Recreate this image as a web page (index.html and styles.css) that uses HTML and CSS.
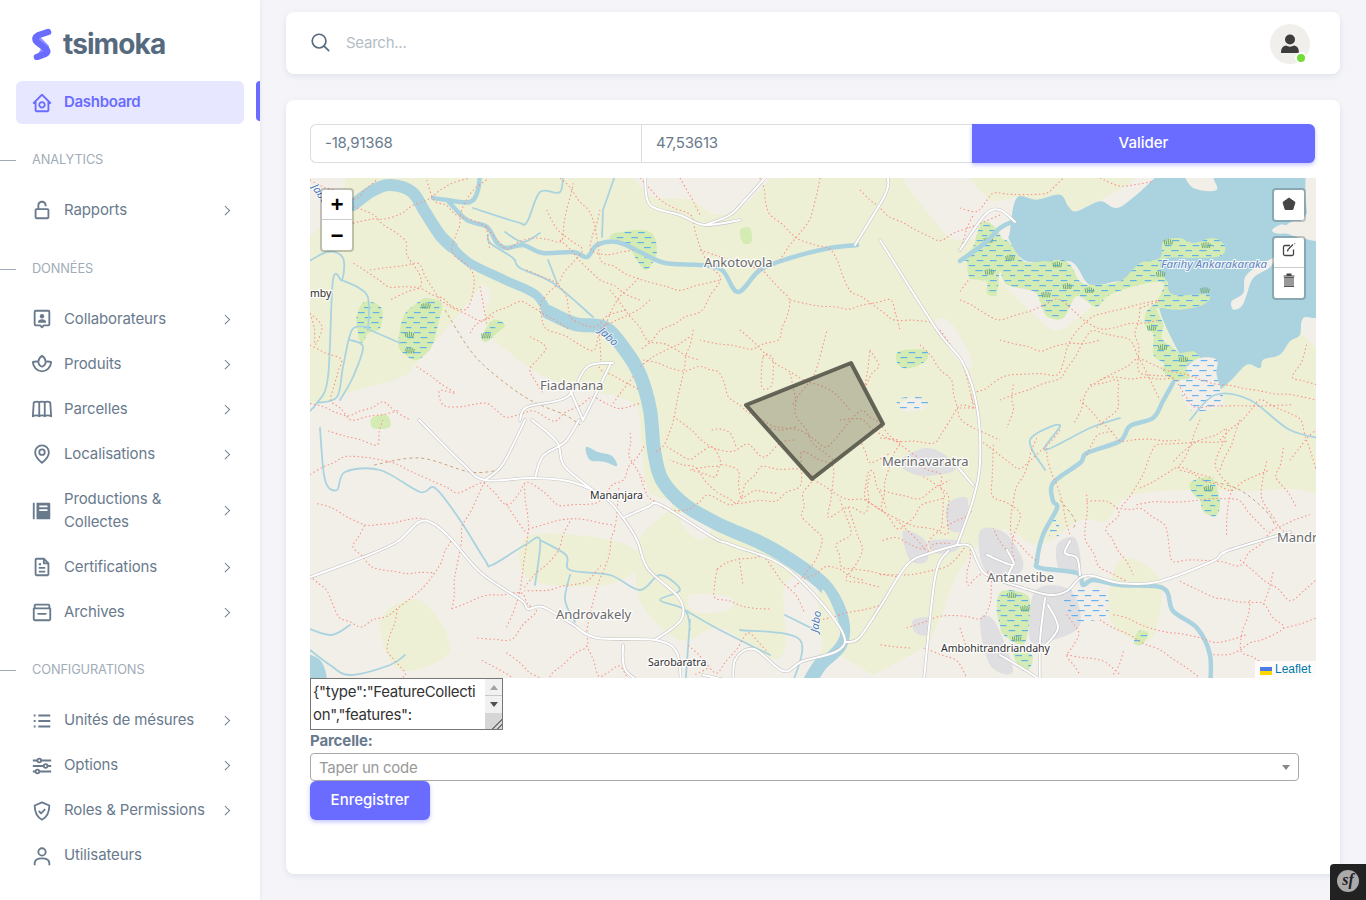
FILE: index.html
```html
<!DOCTYPE html>
<html lang="fr">
<head>
  <meta charset="UTF-8" />
  <meta name="viewport" content="width=device-width, initial-scale=1.0"/>
  <title>tsimoka | Parcelle</title>
  <link rel="stylesheet" href="styles.css">
</head>
<body>

  <aside class="sidebar">
    <div class="brand">
      <svg class="brand-logo" viewBox="0 0 22 32" width="22" height="32">
        <path class="logo-dark" d="M5 9 L15 19 L9 28" />
        <path class="logo-light" d="M17 4 L8 7 Q2 10 6 14 L15 21 Q18 24 14 26 L6 29" />
      </svg>
      <span class="brand-name">tsimoka</span>
    </div>

    <ul class="menu">
      <li class="menu-item active">
        <svg class="menu-icon" viewBox="0 0 24 24"><path class="solid" d="M3 13h1v7c0 1.103.897 2 2 2h12c1.103 0 2-.897 2-2v-7h1a1 1 0 0 0 .707-1.707l-9-9a.999.999 0 0 0-1.414 0l-9 9A1 1 0 0 0 3 13zm9-8.586 6 6V15l.001 5H6v-9.586l6-6z"/><path class="solid" d="M12 18c2.206 0 4-1.794 4-4s-1.794-4-4-4-4 1.794-4 4 1.794 4 4 4zm0-6c1.103 0 2 .897 2 2s-.897 2-2 2-2-.897-2-2 .897-2 2-2z"/></svg>
        <span class="menu-text">Dashboard</span>
      </li>

      <li class="menu-header">Analytics</li>
      <li class="menu-item">
        <svg class="menu-icon" viewBox="0 0 24 24"><path class="solid" d="M17 8V7c0-2.757-2.243-5-5-5S7 4.243 7 7v3H6c-1.103 0-2 .897-2 2v8c0 1.103.897 2 2 2h12c1.103 0 2-.897 2-2v-8c0-1.103-.897-2-2-2H9V7c0-1.654 1.346-3 3-3s3 1.346 3 3v1h2zm1 4 .002 8H6v-8h12z"/></svg>
        <span class="menu-text">Rapports</span><i class="chevron"></i>
      </li>

      <li class="menu-header">Données</li>
      <li class="menu-item">
        <svg class="menu-icon" viewBox="0 0 24 24"><path class="line" d="M5 3h14a1 1 0 0 1 1 1v14a1 1 0 0 1-1 1h-5l-2 2-2-2H5a1 1 0 0 1-1-1V4a1 1 0 0 1 1-1z"/><circle class="solid" cx="12" cy="9" r="2.4"/><path class="solid" d="M7.5 16c0-2.5 2-3.6 4.500-3.600s4.500 1.100 4.500 3.600z"/></svg>
        <span class="menu-text">Collaborateurs</span><i class="chevron"></i>
      </li>
      <li class="menu-item">
        <svg class="menu-icon" viewBox="0 0 24 24"><path class="line" d="M12 3c2.500 2 4 4 4 6.500 0 2.500-1.800 4.500-4 5.500-2.200-1-4-3-4-5.500C8 7 9.500 5 12 3z"/><path class="line" d="M7.500 9.500C5.500 9 3.500 9.300 2 10c.5 5.500 4.500 10 10 10s9.500-4.500 10-10c-1.500-.7-3.500-1-5.500-.5"/></svg>
        <span class="menu-text">Produits</span><i class="chevron"></i>
      </li>
      <li class="menu-item">
        <svg class="menu-icon" viewBox="0 0 24 24"><path class="line" d="M3 5c2-1.500 5-1.500 6 0 1-1.500 5-1.500 6 0 1-1.500 4-1.500 6 0l1 15c-2-1.500-6-1.500-7 0-1-1.500-5-1.500-6 0-1-1.500-5-1.500-7 0z"/><path class="line" d="M9 5v15M15 5v15"/></svg>
        <span class="menu-text">Parcelles</span><i class="chevron"></i>
      </li>
      <li class="menu-item">
        <svg class="menu-icon" viewBox="0 0 24 24"><path class="line" d="M12 2.500a7.500 7.500 0 0 0-7.500 7.500c0 4.700 5 9.500 7.500 11.500 2.500-2 7.500-6.800 7.500-11.500A7.500 7.500 0 0 0 12 2.500z"/><circle class="line" cx="12" cy="10" r="3"/></svg>
        <span class="menu-text">Localisations</span><i class="chevron"></i>
      </li>
      <li class="menu-item">
        <svg class="menu-icon" viewBox="0 0 24 24"><path class="solid" d="M2 3h2v18H2zM6 3h14a1 1 0 0 1 1 1v16a1 1 0 0 1-1 1H6zm3 3v2h9V6zm0 4v2h9v-2z"/></svg>
        <span class="menu-text">Productions &amp; Collectes</span><i class="chevron"></i>
      </li>
      <li class="menu-item">
        <svg class="menu-icon" viewBox="0 0 24 24"><path class="line" d="M6 3h8l5 5v12a1 1 0 0 1-1 1H6a1 1 0 0 1-1-1V4a1 1 0 0 1 1-1z"/><path class="line" d="M14 3v5h5M8.500 9H11M8.500 13h7M8.500 17h7"/></svg>
        <span class="menu-text">Certifications</span><i class="chevron"></i>
      </li>
      <li class="menu-item">
        <svg class="menu-icon" viewBox="0 0 24 24"><path class="line" d="M5 4h14a1 1 0 0 1 1 1v3H4V5a1 1 0 0 1 1-1zM3 8h18v12a1 1 0 0 1-1 1H4a1 1 0 0 1-1-1z"/><path class="line" d="M8 13v1h8v-1"/></svg>
        <span class="menu-text">Archives</span><i class="chevron"></i>
      </li>

      <li class="menu-header">Configurations</li>
      <li class="menu-item">
        <svg class="menu-icon" viewBox="0 0 24 24"><path class="line" d="M8 6h13M8 12h13M8 18h13M3 6h2M3 12h2M3 18h2"/></svg>
        <span class="menu-text">Unités de mésures</span><i class="chevron"></i>
      </li>
      <li class="menu-item">
        <svg class="menu-icon" viewBox="0 0 24 24"><path class="line" d="M2 6h5M11 6h11M2 12h12M18 12h4M2 18h3M9 18h13"/><circle class="line" cx="9" cy="6" r="2"/><circle class="line" cx="16" cy="12" r="2"/><circle class="line" cx="7" cy="18" r="2"/></svg>
        <span class="menu-text">Options</span><i class="chevron"></i>
      </li>
      <li class="menu-item">
        <svg class="menu-icon" viewBox="0 0 24 24"><path class="line" d="M12 2.500 4 6c0 7 1.500 12 8 15.500C18.500 18 20 13 20 6z"/><path class="line" d="m8.500 12 2.500 2.500 4.500-4.500"/></svg>
        <span class="menu-text">Roles &amp; Permissions</span><i class="chevron"></i>
      </li>
      <li class="menu-item">
        <svg class="menu-icon" viewBox="0 0 24 24"><circle class="line" cx="12" cy="7.500" r="4"/><path class="line" d="M4 22v-2c0-3.500 3-5.500 8-5.500s8 2 8 5.500v2"/></svg>
        <span class="menu-text">Utilisateurs</span>
      </li>
    </ul>
  </aside>

  <main class="content">
    <nav class="topbar">
      <svg class="search-icon" viewBox="0 0 24 24" width="22" height="22"><circle cx="11" cy="11" r="7.500"/><path d="m16.500 16.500 5 5"/></svg>
      <span class="search-text">Search...</span>
      <div class="avatar">
        <svg viewBox="0 0 24 24" width="24" height="24"><circle cx="12" cy="7.500" r="5"/><path d="M3 21c0-5 2-7 5-7.500 2.500 1.500 5.500 1.500 8 0 3 .5 5 2.500 5 7.500z"/></svg>
        <span class="avatar-status"></span>
      </div>
    </nav>

    <section class="card">
      <form class="coords">
        <input class="coord-input" type="text" value="-18,91368">
        <input class="coord-input" type="text" value="47,53613">
        <button class="btn-valider" type="button">Valider</button>
      </form>

      <div class="map">
        <svg class="map-svg" viewBox="310 178 1006 500" width="1006" height="500">
          <defs>
            <pattern id="marsh" patternUnits="userSpaceOnUse" width="84" height="60">
              <path class="dash" d="M6 8h20M50 8h20M26 23h20M70 23h14M0 23h6M4 38h20M46 38h22M24 53h20M66 53h16" />
            </pattern>
            <g id="grass"><path class="grass" d="M0 0-3-14M5 0 3-16M10 0V-18M15 0l2-16M20 0l3-13" /></g>
            <g id="road-net">
              <path d="M300 581 361 558 397 542 419 522 434 524 452 540 481 573 521 600 528 609 543 607 572 624 597 638 655 640 677 653 681 690" />
              <path d="M419 420 463 464 485 480 532 478 572 482 605 498 623 518 637 540 648 569 679 598 681 620 655 640M623 645 626 671 655 690M703 675 734 682" />
              <path d="M485 480 503 464 525 420M532 420 557 442 565 467 601 496M535 478 543 456 565 442 579 420" />
              <path d="M613 363 587 367 567 397 527 407 520 420M610 365 593 400 583 420M570 390 583 420" />
              <path d="M623 518 648 507 661 505 714 538 732 545 790 571 845 640 801 662 783 671 754 649 735 660 734 690M845 642 859 638 880 607 907 565 930 553 957 545" />
              <path d="M880 240 937 330 963 363 977 407 980 463 973 500 957 545M948 551 935 578 923 690M957 466 973 485" />
              <path d="M957 545 970 546 977 561 987 575 1023 588 1050 595 1067 591 1080 578 1093 576 1120 583 1157 582 1213 561 1227 551 1290 532" />
              <path d="M987 555 1013 565 1007 550M1013 565 1008 575M1070 541 1065 553 1077 558 1080 575M1045 598 1040 641 1040 690M1048 605 1058 628 1043 648M1000 655 1027 671 1047 685" />
              <path d="M765 178 745 200 730 215 705 225M645 178 650 205 680 215 705 225 740 220M855 245 885 195 888 178M960 250 985 215 1000 210 1015 222" />
            </g>
          </defs>

          <rect class="farm" x="310" y="178" width="1006" height="500" />
          <!-- beige clearings on top of the farmland -->
          <path class="land" d="M295 440 338 398 400 378 417 363 473 297 480 285 490 293 487 330 533 370 573 387 633 403 641 440 648 490 672 505 640 540 640 600 680 640 720 628 765 656 785 650 785 585 815 580 822 640 850 700H295z" />
          <path class="land" d="M880 700 930 640 960 570 1000 530 1040 545 1080 520 1107 521 1133 495 1237 491 1330 511V700z" />
          <path class="land" d="M295 165H345L330 215 295 240zM640 165H765L755 195 720 215 690 200 650 195zM905 165H1010L1015 220 960 240 930 215zM935 325 950 322 972 360 962 365z" />
          <path class="land" d="M1000 165H1330V340L1290 320 1270 280 1180 240 1100 300 1060 330 1040 320 1000 280 980 250z" />
          <path class="farm" d="M528 536 612 540 640 560 610 584 530 580zM420 600 450 650 400 670 380 620zM1120 560 1160 580 1150 640 1110 620zM980 165H1140L1090 205 1040 215 1020 198 990 200z" />
          <path class="land" d="M690 595 730 597 728 610 695 612zM690 505 715 520 700 540 680 520z" />

          <!-- built up -->
          <g class="urban">
            <path d="M900 460 925 448 945 455 955 470 925 476 905 470zM903 531 925 540 927 561 910 560zM947 505 967 498 965 528 950 530zM930 541 960 541 955 551 935 553zM980 531 1005 533 1023 561 1015 575 985 570zM1057 545 1075 538 1080 568 1060 570zM1035 591 1070 590 1080 625 1050 641 1030 640zM913 620 930 618 928 635 915 632zM980 620 995 622 1013 671 990 665z" />
          </g>

          <!-- lake, zoom space -->
          <g transform="translate(960 178) scale(.3333)">
            <path class="water-fill" d="M150 160 170 60 230 65 300 50 325 85 350 100 420 70 470 90 530 50 610 -20H660L700 30 770 35 780 -20H1040L1050 80 1010 140 960 140 945 165 1090 190V400L1030 420 1020 470 990 490 960 530 910 545 900 570 860 560 810 610 750 650 700 600 600 400 620 310 480 310 390 320 330 250 200 250 150 190z" />
            <path class="land" d="M860 290 940 240 930 268 880 300 860 350 845 385 820 395 815 370 850 345zM1000 130 1090 145V190L980 165zM1040 -20H1090V130L1045 120z" />
            <path class="wet" d="M70 130 110 150 125 180 150 195 190 250 250 250 320 250 360 310 400 320 480 310 540 255 600 240 610 190 660 180 700 195 760 180 795 205 780 235 700 240 620 240 600 270 620 310 640 350 745 350 730 380 660 395 600 390 590 395 610 440 605 480 640 510 660 525 700 520 720 545 680 560 690 600 645 610 610 580 610 555 580 530 580 470 555 440 560 400 590 370 610 315 540 320 450 350 420 380 400 385 350 355 310 420 260 415 240 370 220 340 140 320 120 280 110 350 80 345 80 310 30 300 20 250 0 250 40 205 50 170z" />
            <path class="marsh" d="M70 130 110 150 125 180 150 195 190 250 250 250 320 250 360 310 400 320 480 310 540 255 600 240 610 190 660 180 700 195 760 180 795 205 780 235 700 240 620 240 600 270 620 310 640 350 745 350 730 380 660 395 600 390 590 395 610 440 605 480 640 510 660 525 700 520 720 545 680 560 690 600 645 610 610 580 610 555 580 530 580 470 555 440 560 400 590 370 610 315 540 320 450 350 420 380 400 385 350 355 310 420 260 415 240 370 220 340 140 320 120 280 110 350 80 345 80 310 30 300 20 250 0 250 40 205 50 170z" />
            <path class="land" d="M720 540 770 545 770 590 790 660 780 685 700 700 665 650 650 610 690 600 680 570z" />
            <path class="marsh" d="M720 540 770 545 770 590 790 660 780 685 700 700 665 650 650 610 690 600 680 570z" />
            <use href="#grass" x="75" y="195" /><use href="#grass" x="140" y="248" /><use href="#grass" x="78" y="290" /><use href="#grass" x="282" y="268" /><use href="#grass" x="312" y="333" /><use href="#grass" x="248" y="358" /><use href="#grass" x="378" y="345" /><use href="#grass" x="592" y="296" /><use href="#grass" x="728" y="210" /><use href="#grass" x="725" y="345" /><use href="#grass" x="565" y="458" /><use href="#grass" x="598" y="516" /><use href="#grass" x="660" y="552" /><use href="#grass" x="615" y="200" />
          </g>

          <!-- marshes -->
          <g transform="translate(300 170) scale(.3333)">
            <path class="wet" d="M195 395 245 415 240 475 205 490 190 515 178 510 170 440zM380 385 425 400 415 460 395 530 350 570 310 550 295 520 310 440 350 400zM580 450 615 465 590 490 560 515 545 500z" />
            <path class="marsh" d="M195 395 245 415 240 475 205 490 190 515 178 510 170 440zM380 385 425 400 415 460 395 530 350 570 310 550 295 520 310 440 350 400zM580 450 615 465 590 490 560 515 545 500z" />
            <use href="#grass" x="368" y="416" /><use href="#grass" x="318" y="502" /><use href="#grass" x="320" y="550" /><use href="#grass" x="548" y="505" /><use href="#grass" x="980" y="214" />
            <path class="wet" d="M945 190 1020 180 1060 195 1070 250 1040 300 1010 270 990 235 960 215 930 205z" />
            <path class="marsh" d="M945 190 1020 180 1060 195 1070 250 1040 300 1010 270 990 235 960 215 930 205z" />
            <path class="wet" d="M215 745 260 735 270 770 220 775zM1320 180 1350 175 1355 215 1330 220z" />
          </g>
          <g transform="translate(640 330) scale(.3333)">
            <path class="wet" d="M775 65 855 60 860 90 810 115 775 105z" />
            <path class="marsh" d="M775 65 855 60 860 90 810 115 775 105z" />
            <path class="land" d="M780 225 810 205 850 210 855 235 800 245z" />
            <path class="marsh" d="M780 205 860 205 860 235 780 235z" />
          </g>
          <g transform="translate(880 428) scale(.3333)">
            <path class="wet" d="M930 165 995 150 1020 225 1005 265 970 250 960 215 945 205zM365 490 440 500 450 550 440 630 420 650 370 620 360 590 350 545zM400 675 455 680 450 720 425 725zM775 610 805 615 785 650 762 645z" />
            <path class="marsh" d="M930 165 995 150 1020 225 1005 265 970 250 960 215 945 205zM365 490 440 500 450 550 440 630 420 650 370 620 360 590 350 545zM400 675 455 680 450 720 425 725zM775 610 805 615 785 650 762 645zM510 280H535V330H510zM560 490 670 490 680 560 600 580 560 540z" />
            <use href="#grass" x="385" y="510" /><use href="#grass" x="425" y="550" /><use href="#grass" x="400" y="640" /><use href="#grass" x="975" y="190" />
          </g>

          <!-- rivers -->
          <g class="river">
            <path class="r12" d="M353 205 372 191 390 185 412 192 425 212 440 235 452 247" />
            <path class="r9" d="M452 247 470 263 505 280 535 294 548 312" />
            <path class="r14" d="M548 312 575 324 605 328 625 350 640 375 650 410 654 450 662 480 685 505 720 525 765 545 805 570 828 590 842 620 840 645 820 665 805 690" />
            <path class="r5" d="M433 198 447 200 470 202 478 190 480 170M447 200 467 220 487 227 497 243 507 248 523 245 543 253 573 252 587 257 597 245 617 242 640 252 665 263 700 265 722 270 738 292 760 270 790 258 830 248 857 245" />
            <path class="r5" d="M960 261 985 243 1000 228 1012 222" />
            <path class="r5" d="M1173 383 1163 401 1153 418 1130 426 1120 441 1087 453 1080 463 1053 483 1053 501 1057 508 1043 535 1037 561 1040 568 1077 573 1083 585 1093 580 1120 585 1163 588 1173 611 1197 628 1210 655 1210 690" />
            <path class="r2" d="M300 267 327 252 343 258 342 280 333 280 328 377 317 403 305 415M367 327 352 330 343 367 337 397 317 403M350 340 363 347 353 377 340 400M370 330 400 343M342 280 367 295 368 330" />
            <path class="r2" d="M473 208 517 222 527 222 540 192 560 192 563 170M540 233 523 242 505 232M603 210 602 237M617 170 603 210M488 235 490 243 513 258 520 268 553 283 593 317M548 260 557 283" />
            <path class="r2" d="M1045 470 1030 440 1060 425 1045 450 1090 428 1120 418M1190 420 1215 395 1250 400 1290 430 1330 440" />
            <path class="r2" d="M320 428 325 480 337 490 345 472 380 470 420 492 435 488 460 520 485 560 492 565 525 545 540 540 535 585M540 540 566 555 570 570 610 575 640 590 660 575 680 590 660 600 685 610 690 630M570 575 565 600 575 622M685 610 720 630 770 655M740 630 800 640 790 690M785 615 815 630M690 620 685 690" />
            <path class="r2" d="M300 625 330 635 350 625M310 650 330 665 350 675 390 665 405 655" />
          </g>
          <path class="water-fill" d="M295 655 320 660 325 685 295 690zM586 447 598 452 612 456 617 466 605 462 590 460z" />
          <path class="farm" d="M822 590 832 605 840 635 822 655 825 625z" />

          <!-- tracks -->
          <g class="track">
            <path d="M640 178 660 200 690 215 700 250 720 280 700 310 660 330 640 350M760 178 770 215 800 240 830 250 850 290 895 320 930 322M700 250 760 270 790 300 780 340 750 350 700 340M790 300 850 310 890 300 900 330M860 190 890 215 940 240 1000 215M560 178 590 210 600 260 640 280 680 290 720 280M650 300 600 330 600 370 640 390M820 178 810 220 780 260M440 300 480 320 520 300 570 330M960 300 1000 320 1060 300 1100 330 1160 320M1000 400 1060 380 1090 330 1130 340 1160 400M980 440 1020 470 1060 430M1220 440 1260 400 1300 420 1316 470M1200 420 1180 470 1230 490 1270 470M920 345 950 380 960 420 1000 440M310 345 340 360 330 400 350 420 400 410" />
            <path d="M345 225 400 215 440 190 470 178M370 270 420 265 440 300M560 240 600 280 640 300M680 178 700 215M610 290 650 340 700 360M1100 380 1140 360 1200 380 1260 390 1316 400M1000 340 1040 350 1100 340M1080 400 1120 440 1180 440M1240 420 1220 470M1290 460 1316 430M880 490 920 500 950 480M1100 620 1160 650 1200 678M1240 560 1290 600 1316 580M1250 600 1240 650 1290 678" />
          </g>
          <g class="track" transform="translate(640 330) scale(.3333)">
            <path d="M160 0 130 120 100 260 70 350 40 370M10 90 130 125 175 105 240 130 270 200 330 250 400 290 480 300 560 350 600 300 660 240 720 280 790 350 830 380M0 110 80 60 150 20M450 130 470 260 520 340 580 390M370 80 400 80 395 170 365 170zM600 270 660 270 720 310 770 330 880 340 960 230 1005 235M300 0 360 60 410 100 450 130 590 190 630 240M560 5 520 130 455 230M690 60 720 110 700 130 680 170 690 60M900 0 970 100 1000 230M100 260 150 300 220 350 280 360 320 340 370 380 420 340 470 330M215 300 240 295 270 310 290 355M150 420 230 440 240 410 290 420 300 500 320 460 370 410 420 420 480 420 520 450 490 490 490 560 550 630 530 690 480 750M520 450 620 510 670 510 730 545 780 570 880 600 920 610 920 500 880 460 850 440M730 545 680 510 680 430 700 425 740 540M80 350 150 390 215 350 240 400 150 420M600 510 630 610 590 640 610 710 770 740M770 570 800 600 860 660 880 640 930 640M0 440 20 500 80 540 140 540 210 500 270 520 340 480 410 490M380 290 420 300 470 290M660 330 690 400 750 370" />
          </g>
          <g class="track" transform="translate(300 170) scale(.3333)">
            <path d="M30 30 170 90 230 30M160 110 220 130 320 220 320 260 360 310 365 350 270 390M160 280 200 310 270 350 360 350 460 410 500 420 520 360 520 310 460 250 470 200 480 130 520 60 560 30M380 30 400 90 470 130 560 170 620 240 700 200 780 210 800 110 820 40M740 120 770 180 850 240 770 340 720 400 740 480 800 500 880 540 960 380 1020 320M900 120 870 240 920 250 1000 240M350 590 470 670 420 660 430 710 560 700 620 740 700 720 760 750 880 680 960 720 1020 700M540 350 560 460M580 440 530 460 510 490M30 430 70 470 50 520 30 430M30 700 140 740 250 700 330 750M560 170 570 240M680 300 770 340 800 380 820 450 880 470 920 440 980 420M690 500 740 530 690 600 730 670M1000 620 940 700" />
          </g>
          <g class="track" transform="translate(960 178) scale(.3333)">
            <path d="M0 90 50 100 100 50 150 45 260 50 310 0M0 220 40 110M0 340 30 300M420 0 480 20 580 10M540 390 600 370 490 390 400 410 340 470 290 590 140 590 40 650 60 760M540 390 530 470 540 590 640 600 700 690 790 680 940 680 1000 680M390 620 470 610 470 690 410 750M640 600 430 600 380 640 340 740M1040 500 1000 600 1068 620M160 620 160 700 140 750M0 690 50 690" />
          </g>
          <g class="track" transform="translate(880 428) scale(.3333)">
            <path d="M0 30 60 40 30 110 0 240 60 300 130 230 190 210 180 140 70 90M190 210 180 300 130 360 50 330 0 340M300 120 270 260 190 300M340 50 340 200 420 260 400 320 400 400 340 300M470 30 410 180 390 320 470 400M500 60 510 130 530 180 570 320M620 80 660 20 700 10M620 200 620 340 660 420 740 460M620 220 680 220 720 260 680 300 760 440M770 230 880 220 990 210 1080 220 1160 310M780 180 900 120 1000 150M880 100 960 40 1040 0M710 240 780 240 850 290 880 400 970 400 1080 410 1170 310 1290 260M1040 320 1050 180 1010 110 1040 0M1160 100 1140 200 1200 300 1308 340M1210 60 1190 150 1250 240M1040 40 830 50 770 180 720 240M900 460 1000 510 1070 520 1150 530 1210 600 1150 630 1040 680 1000 680M1210 600 1308 570M1150 530 1180 430M560 560 600 620 560 680 600 740M700 560 820 600 900 620 1010 640 1100 620M730 670 700 740 M560 680 680 700 720 740M80 600 140 580 210 560 300 570 330 530 330 430 260 470 270 350M90 660 0 650M130 660 230 700 260 750M240 600 260 660 M0 440 100 440 200 420 260 350" />
          </g>
          <g class="track" transform="translate(310 420) scale(.3636)">
            <path d="M0 150 100 100 200 110 300 150 410 200 480 170 540 230 600 170 680 230 780 230 860 160 920 70M50 30 180 70 200 0M540 230 600 310 590 180M20 230 60 240 150 290 310 270 390 330 340 430 240 520 140 570 80 540 50 470 0 430M150 290 120 350 170 400 230 420 340 420M240 520 210 630 260 700 200 730 110 750M390 520 480 480 580 480 620 530 550 600 460 600M480 170 420 290 390 520M600 310 580 470 540 570M600 300 720 270 840 290 810 400 770 530 760 620 640 720 580 720 470 660M840 290 850 180M720 270 680 360 590 460M800 400 760 440 660 470 590 470M920 170 880 100 880 30M1120 410 1180 380 1250 380 1300 450 1340 480 1360 530M1120 410 1110 490 1190 510 1270 520M1180 380 1190 450M1040 620 1120 700 1200 590 1260 640M1540 150 1530 260 1480 240 1430 270 1440 130 1350 90 1350 180 1280 220 1180 230 1120 200 1060 130 990 110M1520 440 1420 400 1330 460M1480 240 1520 360 1470 440 1568 460M1400 550 1568 510M1060 700 1100 680M760 620 790 700 850 680 900 750M540 640 640 720 640 770M300 770 400 760 480 770" />
          </g>
          <g class="path-line">
            <path d="M445 310 470 350 495 375 530 400 565 415 580 425" /><path d="M374 465 420 458 470 472 500 470" /><path d="M1215 482 1240 490 1265 510 1275 525" /><path d="M1060 500 1075 520 1072 530" />
          </g>

          <!-- roads: grey casing below, white fill above -->
          <g class="roads">
            <use class="road-casing" href="#road-net" />
            <use class="road-fill" href="#road-net" />
          </g>

          <!-- labels -->
          <g class="labels">
            <text class="town" x="704" y="267">Ankotovola</text>
            <text class="town" x="540" y="390">Fiadanana</text>
            <text class="town" x="882" y="466">Merinavaratra</text>
            <text class="town" x="987" y="582">Antanetibe</text>
            <text class="town" x="556" y="619">Androvakely</text>
            <text class="town" x="1277" y="542">Mandr</text>
            <text class="village" x="590" y="499">Mananjara</text>
            <text class="village" x="648" y="666">Sarobaratra</text>
            <text class="village" x="941" y="652">Ambohitrandriandahy</text>
            <text class="village" x="310" y="297">mby</text>
            <text class="lake-name" x="1161" y="268">Farihy Ankarakaraka</text>
            <text class="river-name" transform="translate(598 332) rotate(42)">Jabo</text>
            <text class="river-name" transform="translate(818 633) rotate(-82)">Jabo</text>
            <text class="river-name" transform="translate(311 187) rotate(55)">Jabo</text>
          </g>

          <!-- parcel drawn by the user -->
          <path class="parcel" d="M746 405 851 363 883 424 812 479z" />
        </svg>

        <div class="map-ctrl zoom-ctrl">
          <a class="map-btn zoom-btn">+</a>
          <a class="map-btn zoom-btn">−</a>
        </div>
        <div class="map-ctrl draw-ctrl">
          <a class="map-btn">
            <svg viewBox="0 0 16 16" width="16" height="16"><path class="ico-fill" d="M8 2 14 6.300 11.800 13.500 4.200 13.500 2 6.300z"/></svg>
          </a>
        </div>
        <div class="map-ctrl edit-ctrl">
          <a class="map-btn">
            <svg viewBox="0 0 16 16" width="16" height="16"><path class="ico-line" d="M9 3.500H4A1.500 1.500 0 0 0 2.500 5v7A1.500 1.500 0 0 0 4 13.500h7a1.500 1.500 0 0 0 1.500-1.500V7.500"/><path class="ico-line" d="M6.500 9.500 7 7.500 12 2.500M13.500 1.500l.5.500"/></svg>
          </a>
          <a class="map-btn">
            <svg viewBox="0 0 16 16" width="16" height="16"><path class="ico-grey" d="M3 5h10v10H3z"/><path class="ico-dark" d="M2.500 3.500h11v1h-11zM5.500 1.500h5v2h-5zM3 5h10v.800H3zM3 14.200h10v.800H3z"/></svg>
          </a>
        </div>
        <div class="attribution">
          <span class="flag"></span><a>Leaflet</a>
        </div>
      </div>

      <div class="geojson-box">
        <textarea class="geojson" readonly>{"type":"FeatureCollection","features":[{"id":"f6a1c9","type":"Feature","properties":{},"geometry":{"coordinates":[[[47.53613,-18.91368],[47.54013,-18.91768],[47.54213,-18.91168]]],"type":"Polygon"}}]}</textarea>
        <div class="scrollbar">
          <span class="scroll-btn"><i class="arrow-up"></i></span>
          <span class="scroll-btn"><i class="arrow-down"></i></span>
          <span class="scroll-corner"></span>
        </div>
      </div>
      <label class="field-label">Parcelle:</label>
      <div class="select-box">
        <span class="select-placeholder">Taper un code</span>
        <i class="select-arrow"></i>
      </div>
      <button class="btn-save" type="button">Enregistrer</button>
    </section>
  </main>

  <div class="sf-toolbar"><span class="sf-logo">sf</span></div>

  <script src="map.js"></script>
</body>
</html>
```

FILE: styles.css
```css
* {
  margin: 0;
  padding: 0;
  box-sizing: border-box;
}

html, body {
  height: 900px;
  overflow: hidden;
}

body {
  font-family: 'Inter', 'Liberation Sans', sans-serif;
  font-size: 15px;
  letter-spacing: -0.12px;
  background: #f5f5f9;
  color: #697a8d;
  display: flex;
}

/* sidebar */
.sidebar {
  width: 260px;
  flex-shrink: 0;
  background: #fff;
  box-shadow: 0 0 4px rgba(67, 89, 113, 0.12);
}

.brand {
  height: 81px;
  padding: 7px 0 0 31px;
  display: flex;
  align-items: center;
  gap: 10px;
}

.logo-light, .logo-dark {
  fill: none;
  stroke-linecap: round;
  stroke-linejoin: round;
}

.logo-light {
  stroke: #696cff;
  stroke-width: 6.5;
}

.logo-dark {
  stroke: #8f91ff;
  stroke-width: 6;
}

.brand-name {
  font-size: 28px;
  font-weight: 700;
  color: #566a7f;
  letter-spacing: -0.9px;
}

.menu {
  list-style: none;
}

.menu-item {
  position: relative;
  display: flex;
  align-items: center;
  margin: 0 16px;
  padding: 11.24px 16px;
  line-height: 22.5px;
  border-radius: 6px;
}

.menu-text {
  flex: 1;
}

.menu-icon {
  width: 22px;
  height: 22px;
  margin: 0 11px 0 -1px;
  flex-shrink: 0;
}

.menu-icon .solid {
  fill: #697a8d;
}

.menu-icon .line {
  fill: none;
  stroke: #697a8d;
  stroke-width: 2;
  stroke-linejoin: round;
}

.menu-item.active {
  background: #e7e7ff;
  color: #696cff;
  font-weight: 600;
  letter-spacing: -0.3px;
  padding: 10.25px 16px;
}

.menu-item.active .solid {
  fill: #696cff;
}

.menu-item.active::after {
  content: "";
  position: absolute;
  top: 0;
  right: -16px;
  width: 4px;
  height: 40px;
  background: #696cff;
  border-radius: 4px 0 0 4px;
}

.chevron {
  width: 6.5px;
  height: 6.5px;
  border-top: 1px solid #697a8d;
  border-right: 1px solid #697a8d;
  transform: rotate(45deg);
}

.menu-header {
  position: relative;
  height: 64px;
  padding: 26px 0 0 32px;
  font-size: 12.8px;
  line-height: 20px;
  text-transform: uppercase;
  color: #a1acb8;
}

.menu-header::before {
  content: "";
  position: absolute;
  left: 0;
  top: 36px;
  width: 16px;
  height: 1px;
  background: #a1acb8;
}

/* main column */
.content {
  flex: 1;
  padding: 12px 26px 0;
}

.topbar {
  height: 62px;
  background: #fff;
  border-radius: 8px;
  box-shadow: 0 2px 6px rgba(67, 89, 113, 0.12);
  display: flex;
  align-items: center;
  padding: 0 30px 2px 23px;
  margin-bottom: 26px;
}

.search-icon {
  fill: none;
  stroke: #566a7f;
  stroke-width: 1.8;
  stroke-linecap: round;
  margin-right: 15px;
}

.search-text {
  flex: 1;
  color: #b4bdc6;
  letter-spacing: -0.25px;
}

.avatar {
  position: relative;
  width: 40px;
  height: 40px;
  margin-top: 4px;
  border-radius: 50%;
  background: #f0efec;
  display: flex;
  align-items: center;
  justify-content: center;
}

.avatar svg {
  fill: #3d3d3d;
}

.avatar-status {
  position: absolute;
  right: 3px;
  bottom: 0;
  width: 12px;
  height: 12px;
  border-radius: 50%;
  background: #71dd37;
  border: 2px solid #fff;
}

.card {
  height: 774px;
  background: #fff;
  border-radius: 8px;
  box-shadow: 0 2px 6px rgba(67, 89, 113, 0.12);
  padding: 24px;
}

.coords {
  display: grid;
  grid-template-columns: 331px 331px 343px;
  height: 39px;
  margin-bottom: 15px;
}

.coord-input {
  font: inherit;
  letter-spacing: -0.2px;
  color: #697a8d;
  padding: 0 14px 2px;
  border: 1px solid #d9dee3;
  border-right: 0;
  outline: none;
}

.coord-input:first-child {
  border-radius: 6px 0 0 6px;
}

.btn-valider, .btn-save {
  font: inherit;
  font-weight: 500;
  color: #fff;
  background: #696cff;
  border: 0;
  padding-bottom: 2px;
  box-shadow: 0 2px 4px rgba(105, 108, 255, 0.4);
}

.btn-valider {
  border-radius: 0 6px 6px 0;
}

.btn-save {
  display: block;
  width: 120px;
  height: 39px;
  border-radius: 6px;
}

/* map */
.map {
  position: relative;
  width: 1006px;
  height: 500px;
  overflow: hidden;
  background: #eef0d5;
}

.map-svg {
  display: block;
}

.map-svg path {
  vector-effect: non-scaling-stroke;
}

.land { fill: #f2efe9; }
.farm { fill: #eef0d5; }
.urban { fill: #dfdfe1; }
.water-fill { fill: #aad3df; }
.wet { fill: #d4ecb4; }
.marsh { fill: url(#marsh); }

.map-svg .dash {
  fill: none;
  stroke: #4ba6f2;
  stroke-width: 3;
  vector-effect: none;
}

.grass {
  fill: none;
  stroke: #6ea878;
  stroke-width: 1;
}

.river path {
  fill: none;
  stroke: #aad3df;
  stroke-linejoin: round;
  stroke-linecap: round;
}

.river .r14 { stroke-width: 14px; }
.river .r12 { stroke-width: 12px; }
.river .r9 { stroke-width: 9px; }
.river .r5 { stroke-width: 4.500px; }
.river .r2 { stroke-width: 1.800px; }

.track path {
  fill: none;
  stroke: #f79288;
  stroke-width: 1.100px;
  stroke-dasharray: 1.500 2.500;
}

.path-line path {
  fill: none;
  stroke: #c9a27a;
  stroke-width: 1px;
  stroke-dasharray: 3 3;
}

#road-net path {
  fill: none;
  stroke-linejoin: round;
  stroke-linecap: round;
}

.road-casing {
  stroke: #c6c6c6;
  stroke-width: 3.200px;
}

.road-fill {
  stroke: #fff;
  stroke-width: 2px;
}

.labels text {
  font-family: 'Noto Sans', 'Open Sans', sans-serif;
  letter-spacing: 0;
  paint-order: stroke;
  stroke: rgba(255, 255, 255, 0.85);
  stroke-width: 2.500px;
}

.labels .town {
  font-size: 13px;
  fill: #6a6a6a;
}

.labels .village {
  font-size: 10.500px;
  fill: #2f2f2f;
}

.labels .lake-name {
  font-size: 11.500px;
  font-style: italic;
  fill: #5f83bd;
  stroke-width: 2px;
}

.labels .river-name {
  font-size: 11px;
  font-style: italic;
  fill: #4f79b5;
  stroke-width: 1.500px;
}

.parcel {
  fill: #76755a;
  fill-opacity: 0.4;
  stroke: #57574a;
  stroke-opacity: 0.9;
  stroke-width: 4px;
  stroke-linejoin: round;
}

.map-ctrl {
  position: absolute;
  background: #fff;
  border: 2px solid rgba(0, 0, 0, 0.2);
  background-clip: padding-box;
  border-radius: 4px;
}

.map-btn {
  display: flex;
  align-items: center;
  justify-content: center;
  width: 30px;
  height: 30px;
  border-bottom: 1px solid #ccc;
  color: #000;
}

.map-btn:last-child {
  border-bottom: 0;
}

.zoom-ctrl {
  left: 10px;
  top: 10px;
}

.zoom-btn {
  font-family: 'Liberation Mono', monospace;
  font-size: 22px;
  font-weight: 700;
  padding-top: 4px;
}

.draw-ctrl {
  right: 10px;
  top: 10px;
}

.draw-ctrl svg {
  margin-top: -2px;
}

.edit-ctrl {
  right: 10px;
  top: 58px;
}

.edit-ctrl svg {
  margin-top: -6px;
}

.ico-fill { fill: #444; stroke: #444; stroke-linejoin: round; }
.ico-line { fill: none; stroke: #444; stroke-width: 1.300; }
.ico-grey { fill: #999; }
.ico-dark { fill: #444; }

.attribution {
  position: absolute;
  right: 0;
  bottom: 0;
  height: 17px;
  padding: 0 5px;
  background: rgba(255, 255, 255, 0.8);
  font-family: 'Liberation Sans', sans-serif;
  font-size: 12px;
  letter-spacing: 0;
  line-height: 15px;
  color: #0078a8;
  display: flex;
  align-items: center;
  gap: 3px;
}

.flag {
  width: 12px;
  height: 8px;
  margin-top: 2px;
  background: linear-gradient(#4c7be1 50%, #ffd500 50%);
}

/* form under the map */
.geojson-box {
  position: relative;
  width: 193px;
  height: 52px;
}

.geojson {
  display: block;
  width: 193px;
  height: 52px;
  font: inherit;
  letter-spacing: -0.3px;
  line-height: 22.5px;
  color: #333;
  padding: 2px 19px 2px 2px;
  border: 1px solid #767676;
  overflow: hidden;
  resize: none;
  outline: none;
}

.scrollbar {
  position: absolute;
  top: 1px;
  right: 1px;
  width: 17px;
  height: 50px;
  background: #f1f1f1;
  display: flex;
  flex-direction: column;
}

.scroll-btn {
  height: 17px;
  display: flex;
  align-items: center;
  justify-content: center;
}

.scroll-btn:first-child {
  border-bottom: 1px solid #c8c8c8;
}

.arrow-up, .arrow-down {
  width: 0;
  height: 0;
  border-left: 4px solid transparent;
  border-right: 4px solid transparent;
}

.arrow-up { border-bottom: 5px solid #a3a3a3; }
.arrow-down { border-top: 5px solid #505050; }

.scroll-corner {
  flex: 1;
  background:
    linear-gradient(135deg, transparent 68%, #777 68%, #777 73%, transparent 73%, transparent 84%, #777 84%, #777 89%, transparent 89%),
    #d6d6d6;
}

.field-label {
  display: block;
  font-weight: 700;
  line-height: 22.5px;
  height: 23px;
}

.select-box {
  display: flex;
  align-items: center;
  justify-content: space-between;
  width: 989px;
  height: 28px;
  padding: 1px 8px 0;
  border: 1px solid #aaa;
  border-radius: 4px;
  background: #fff;
}

.select-placeholder {
  color: #999;
  letter-spacing: -0.3px;
}

.select-arrow {
  width: 0;
  height: 0;
  border-left: 4px solid transparent;
  border-right: 4px solid transparent;
  border-top: 5px solid #888;
}

/* debug toolbar badge */
.sf-toolbar {
  position: fixed;
  right: 0;
  bottom: 0;
  width: 36px;
  height: 36px;
  background: #222;
  border-top-left-radius: 4px;
  display: flex;
  align-items: center;
  justify-content: center;
}

.sf-logo {
  width: 22px;
  height: 22px;
  margin-top: -2px;
  border-radius: 50%;
  background: #aaa;
  color: #222;
  font-family: 'Liberation Serif', serif;
  font-style: italic;
  font-weight: 700;
  font-size: 16px;
  line-height: 20px;
  text-align: center;
}
```

FILE: map.js
```js
// turns the hand traced polylines of the map into soft curves,
// tracks get a little wobble so they look like footpaths
let seed = 7;
function rand() {
  seed = (seed * 16807) % 2147483647;
  return seed / 2147483647 - 0.5;
}

function parse(d) {
  const tokens = d.match(/[MLHVZz]|-?\d*\.?\d+/g);
  const parts = [];
  let cur = null, cmd = "M", i = 0;
  while (i < tokens.length) {
    const t = tokens[i];
    if (/[A-Za-z]/.test(t)) {
      cmd = t;
      i++;
      if (cmd === "Z" || cmd === "z") cur.closed = true;
      continue;
    }
    if (cmd === "M") {
      cur = { pts: [[+t, +tokens[i + 1]]], closed: false };
      parts.push(cur);
      cmd = "L";
      i += 2;
    } else if (cmd === "L") {
      cur.pts.push([+t, +tokens[i + 1]]);
      i += 2;
    } else if (cmd === "H") {
      cur.pts.push([+t, cur.pts[cur.pts.length - 1][1]]);
      i++;
    } else {
      cur.pts.push([cur.pts[cur.pts.length - 1][0], +t]);
      i++;
    }
  }
  return parts;
}

function wobble(pts, scale) {
  const step = 15 / scale, amp = 3.2 / scale;
  const out = [];
  for (let i = 0; i < pts.length - 1; i++) {
    const [x1, y1] = pts[i], [x2, y2] = pts[i + 1];
    const n = Math.max(1, Math.round(Math.hypot(x2 - x1, y2 - y1) / step));
    for (let k = 0; k < n; k++) {
      const j = i === 0 && k === 0 ? 0 : amp;
      out.push([x1 + (x2 - x1) * k / n + rand() * j, y1 + (y2 - y1) * k / n + rand() * j]);
    }
  }
  out.push(pts[pts.length - 1]);
  return out;
}

function curve(part) {
  const p = part.pts, n = p.length;
  const at = (i) => part.closed ? p[(i + n) % n] : p[Math.min(n - 1, Math.max(0, i))];
  let d = `M${p[0][0]} ${p[0][1]}`;
  const last = part.closed ? n : n - 1;
  for (let i = 0; i < last; i++) {
    const a = at(i - 1), b = at(i), c = at(i + 1), e = at(i + 2);
    d += `C${b[0] + (c[0] - a[0]) / 6} ${b[1] + (c[1] - a[1]) / 6} ${c[0] - (e[0] - b[0]) / 6} ${c[1] - (e[1] - b[1]) / 6} ${c[0]} ${c[1]}`;
  }
  return d + (part.closed ? "Z" : "");
}

document.querySelectorAll(".track path, .river path, #road-net path, .path-line path, path.land, path.farm, .urban path, path.water-fill, path.wet, path.marsh").forEach((el) => {
  const isTrack = el.closest(".track") !== null;
  const scale = el.parentNode.getAttribute("transform") ? parseFloat(el.parentNode.getAttribute("transform").split("scale(")[1]) : 1;
  const parts = parse(el.getAttribute("d"));
  el.setAttribute("d", parts.map((part) => {
    if (isTrack) part.pts = wobble(part.pts, scale);
    return curve(part);
  }).join(""));
});
```
